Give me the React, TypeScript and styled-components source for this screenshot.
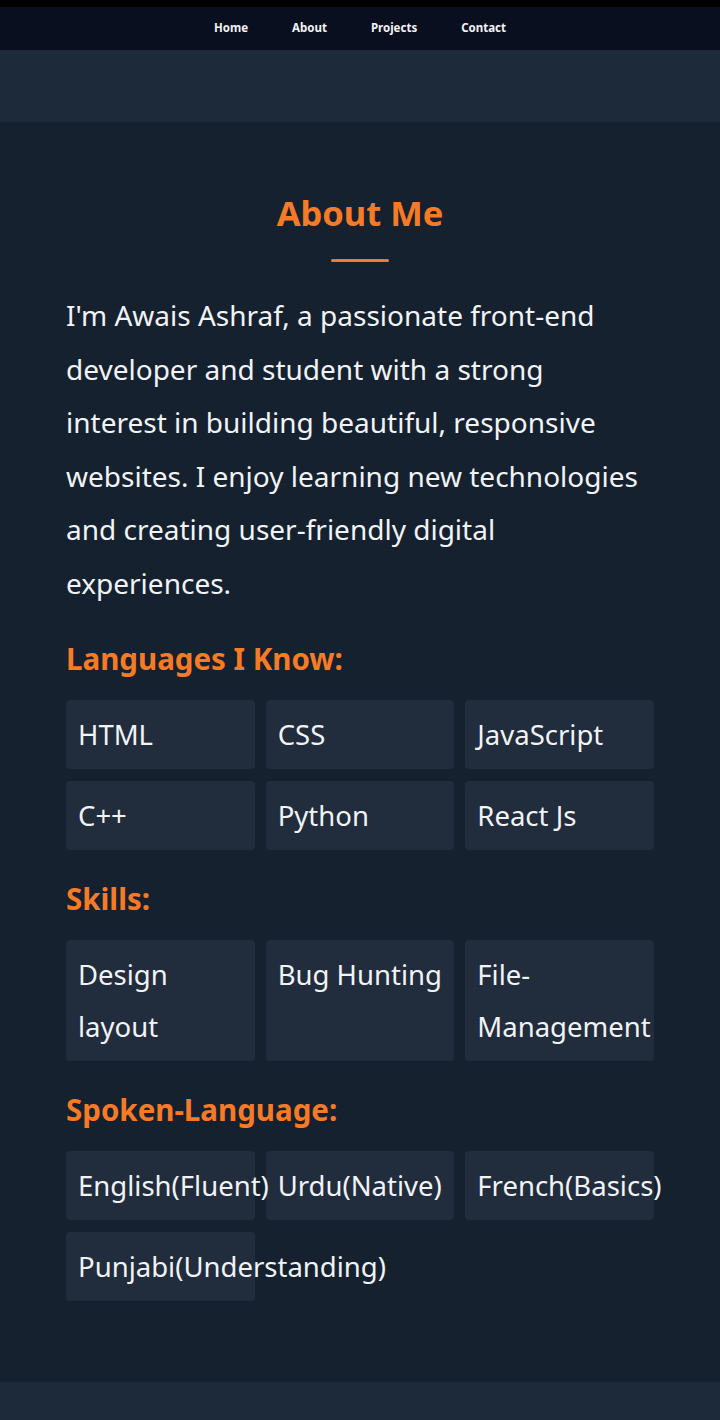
import React from "react";
import styled, { createGlobalStyle } from "styled-components";

const GlobalStyle = createGlobalStyle`
  html, body {
    margin: 0;
    padding: 0;
    background: #16212f;
  }
  body {
    font-family: "Noto Sans", "Open Sans", sans-serif;
    color: #f1f3f5;
  }
  * { box-sizing: border-box; }
`;

const TopStrip = styled.div`
  height: 7px;
  background: #000;
`;

const Nav = styled.nav`
  height: 43px;
  background: #0a0f1f;
  display: flex;
  align-items: center;
  justify-content: center;
  gap: 44px;
  padding-bottom: 1px;
`;

const NavLink = styled.a`
  color: #f3f4f6;
  font-size: 11.5px;
  font-weight: 700;
  text-decoration: none;
  line-height: 1;
`;

const Band = styled.div`
  height: 72px;
  background: #1c2a3a;
`;

const Section = styled.section`
  background: #16212f;
  padding: 71px 66px 81px;
`;

const Title = styled.h2`
  margin: 0;
  text-align: center;
  color: #f77b27;
  font-size: 34.5px;
  line-height: 40px;
  font-weight: 700;
`;

const Underline = styled.div`
  width: 58px;
  height: 3px;
  border-radius: 2px;
  background: #f77b27;
  margin: 26px auto 27px;
`;

const Bio = styled.p`
  margin: 0 0 1px;
  max-width: 578px;
  font-size: 28px;
  line-height: 53.5px;
  color: #f1f3f5;
`;

const Heading = styled.h3`
  margin: 32px 0 24px;
  color: #f77b27;
  font-size: 29.5px;
  line-height: 34px;
  font-weight: 700;
`;

const Grid = styled.div`
  display: grid;
  grid-template-columns: repeat(3, minmax(0, 1fr));
  column-gap: 11px;
  row-gap: 12px;
`;

const Card = styled.div`
  background: #212c3c;
  border-radius: 4px;
  padding: 8.5px 8px 8.5px 12px;
  font-size: 27.5px;
  line-height: 52px;
  color: #f1f3f5;
`;

const Label = styled.span`
  position: relative;
  z-index: 1;
`;

const languages = ["HTML", "CSS", "JavaScript", "C++", "Python", "React Js"];
const skills = ["Design layout", "Bug Hunting", "File-Management"];
const spoken = [
  "English(Fluent)",
  "Urdu(Native)",
  "French(Basics)",
  "Punjabi(Understanding)",
];

function Chips({ items }: { items: string[] }) {
  return (
    <Grid>
      {items.map((l) => (
        <Card key={l}>
          <Label>{l}</Label>
        </Card>
      ))}
    </Grid>
  );
}

export default function App() {
  return (
    <>
      <GlobalStyle />
      <TopStrip />
      <Nav>
        <NavLink href="#">Home</NavLink>
        <NavLink href="#">About</NavLink>
        <NavLink href="#">Projects</NavLink>
        <NavLink href="#">Contact</NavLink>
      </Nav>
      <Band />
      <Section>
        <Title>About Me</Title>
        <Underline />
        <Bio>
          I'm Awais Ashraf, a passionate front-end developer and student with a
          strong interest in building beautiful, responsive websites. I enjoy
          learning new technologies and creating user-friendly digital
          experiences.
        </Bio>
        <Heading>Languages I Know:</Heading>
        <Chips items={languages} />
        <Heading>Skills:</Heading>
        <Chips items={skills} />
        <Heading>Spoken-Language:</Heading>
        <Chips items={spoken} />
      </Section>
      <Band />
    </>
  );
}
